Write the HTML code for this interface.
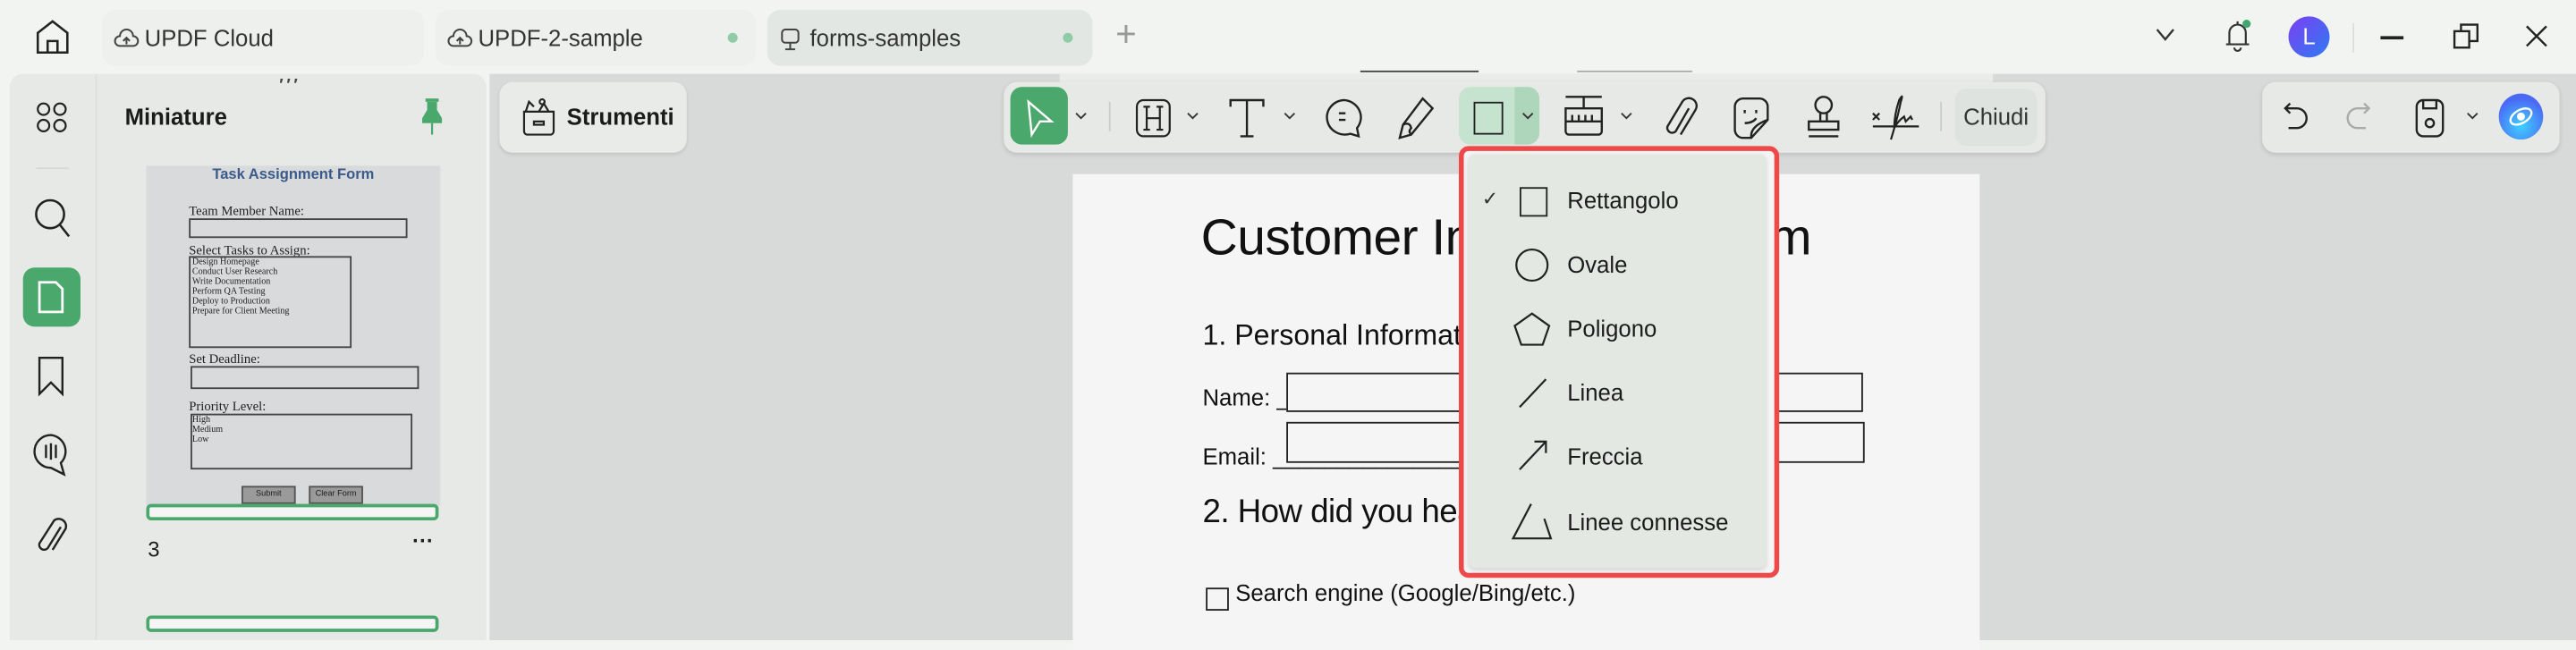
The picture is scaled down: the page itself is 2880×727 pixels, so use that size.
<!DOCTYPE html>
<html><head><meta charset="utf-8">
<style>
html,body{margin:0;padding:0;width:2880px;height:694px;overflow:hidden;background:#f2f4f2;}
#w{position:absolute;left:0;top:0;width:1568px;height:378px;transform:scale(1.836735,1.835979);transform-origin:0 0;font-family:"Liberation Sans","DejaVu Sans",sans-serif;color:#1b1b1b;}
.a{position:absolute;}
svg{position:absolute;overflow:visible;}
.tab{position:absolute;top:6px;height:34px;border-radius:8px;background:#edf0ed;font-size:14px;line-height:34px;color:#333;}
.dot{position:absolute;width:6px;height:6px;border-radius:50%;background:#8fcca6;top:14px;}
.tt{position:absolute;font-size:8px;font-family:"Liberation Serif",serif;color:#222;}
.box{position:absolute;border:1px solid #444;}
.mi{position:absolute;left:954px;font-size:14px;color:#1b1b1b;}
</style></head><body><div id="w">
<!-- title bar -->
<svg style="left:21px;top:11px" width="22" height="22" viewBox="0 0 22 22" fill="none" stroke="#222" stroke-width="1.4"><path d="M2 9 L11 2 L20 9 V21 H2 Z M8 21 V14 H14 V21"/></svg>
<div class="tab" style="left:62px;width:196px;"><svg style="left:8px;top:10px" width="14" height="14" viewBox="0 0 14 14" fill="none" stroke="#444" stroke-width="1.1"><path d="M3 12 A3 3 0 0 1 3 6 A4 4 0 0 1 11 6 A3 3 0 0 1 11 12 Z M7 7 V11 M5 9 L7 7 L9 9"/></svg><span class="a" style="left:26px">UPDF Cloud</span></div>
<div class="tab" style="left:265px;width:195px;"><svg style="left:8px;top:10px" width="14" height="14" viewBox="0 0 14 14" fill="none" stroke="#444" stroke-width="1.1"><path d="M3 12 A3 3 0 0 1 3 6 A4 4 0 0 1 11 6 A3 3 0 0 1 11 12 Z M7 7 V11 M5 9 L7 7 L9 9"/></svg><span class="a" style="left:26px">UPDF-2-sample</span><div class="dot" style="left:178px"></div></div>
<div class="tab" style="left:467px;width:198px;background:#e3e7e3"><svg style="left:8px;top:11px" width="12" height="14" viewBox="0 0 12 14" fill="none" stroke="#444" stroke-width="1.1"><rect x="1" y="1" width="10" height="8" rx="2"/><path d="M6 9 V13 M3 13 H9"/></svg><span class="a" style="left:26px">forms-samples</span><div class="dot" style="left:180px"></div></div>
<div class="a" style="left:679px;top:8px;font-size:22px;color:#999;font-weight:300">+</div>
<svg style="left:1312px;top:17px" width="12" height="8" viewBox="0 0 12 8" fill="none" stroke="#333" stroke-width="1.3"><path d="M1 1 L6 7 L11 1"/></svg>
<svg style="left:1354px;top:12px" width="16" height="20" viewBox="0 0 16 20" fill="none" stroke="#333" stroke-width="1.2"><path d="M3 15 V8 A5 5 0 0 1 13 8 V15 Z M1 15 H15 M6 17 A2 2 0 0 0 10 17 M8 1 V3"/></svg>
<div class="a" style="left:1365px;top:12px;width:5px;height:5px;border-radius:50%;background:#3fa86a"></div>
<div class="a" style="left:1393px;top:10px;width:25px;height:25px;border-radius:50%;background:linear-gradient(135deg,#7b3ff2,#2f7bf2);color:#fff;font-size:14px;text-align:center;line-height:25px">L</div>
<div class="a" style="left:1432px;top:14px;width:1px;height:18px;background:#ddd"></div>
<div class="a" style="left:1449px;top:22px;width:14px;height:1.5px;background:#222"></div>
<svg style="left:1493px;top:14px" width="16" height="16" viewBox="0 0 16 16" fill="none" stroke="#222" stroke-width="1.3"><rect x="1" y="5" width="9" height="10"/><path d="M5 5 V1 H15 V11 H10"/></svg>
<svg style="left:1537px;top:15px" width="14" height="14" viewBox="0 0 14 14" fill="none" stroke="#222" stroke-width="1.3"><path d="M1 1 L13 13 M13 1 L1 13"/></svg>
<div class="a" style="left:828px;top:43px;width:72px;height:1px;background:#444"></div>
<div class="a" style="left:960px;top:43px;width:70px;height:1px;background:#aaa"></div>

<!-- left panel -->
<div class="a" style="left:6px;top:45px;width:290px;height:345px;background:#e6e9e6;border-radius:8px 8px 0 0"></div>
<div class="a" style="left:58px;top:45px;width:1px;height:345px;background:#dde0dd"></div>
<svg style="left:22px;top:62px" width="20" height="20" viewBox="0 0 20 20" fill="none" stroke="#222" stroke-width="1.2"><rect x="1" y="1" width="7" height="7" rx="3.5"/><rect x="11" y="1" width="7" height="7" rx="3.5"/><rect x="1" y="11" width="7" height="7" rx="3.5"/><rect x="11" y="11" width="7" height="7" rx="3.5"/></svg>
<div class="a" style="left:22px;top:102px;width:20px;height:1px;background:#d6d9d6"></div>
<svg style="left:21px;top:121px" width="22" height="24" viewBox="0 0 22 24" fill="none" stroke="#222" stroke-width="1.4"><circle cx="9.5" cy="9.5" r="8.5"/><path d="M15.5 16 L21 23"/></svg>
<div class="a" style="left:14px;top:163px;width:35px;height:36px;border-radius:7px;background:#4aa86c"></div>
<svg style="left:22px;top:170px" width="18" height="22" viewBox="0 0 18 22" fill="none" stroke="#fff" stroke-width="1.5"><path d="M2 2 H12 L16 6 V20 H2 Z"/></svg>
<svg style="left:23px;top:217px" width="16" height="24" viewBox="0 0 16 24" fill="none" stroke="#222" stroke-width="1.3"><path d="M1 1 H15 V23 L8 16 L1 23 Z"/></svg>
<svg style="left:20px;top:264px" width="22" height="26" viewBox="0 0 22 26" fill="none" stroke="#222" stroke-width="1.3"><path d="M11 1 A10 10 0 1 0 11 21 L19 25 L17 18 A10 10 0 0 0 11 1 Z M8 7 V15 M11 6 V16 M14 7 V15"/></svg>
<svg style="left:22px;top:313px" width="20" height="26" viewBox="0 0 20 26" fill="none" stroke="#222" stroke-width="1.3"><path d="M15 8 L7 21 A3 3 0 0 1 2 18 L11 4 A4.5 4.5 0 0 1 18 9 L10 22"/></svg>
<div class="a" style="left:76px;top:63px;font-size:14px;font-weight:bold;color:#1b1b1b">Miniature</div>
<div class="a" style="left:170px;top:47px;font-size:10px;letter-spacing:2px;color:#444;font-weight:bold">&#8242;&#8242;&#8242;</div>
<svg style="left:256px;top:60px" width="14" height="22" viewBox="0 0 14 22" fill="#4aa86c"><rect x="3" y="0" width="8" height="2"/><path d="M4 2 H10 V7 L13 12 V15 H1 V12 L4 7 Z"/><rect x="6.4" y="15" width="1.2" height="7"/></svg>
<div class="a" style="left:89px;top:101px;width:179px;height:207px;background:#d8dadb"></div>
<div class="a" style="left:89px;top:101px;width:179px;text-align:center;font-size:9px;font-weight:bold;color:#3a5a8a">Task Assignment Form</div>
<div class="tt" style="left:115px;top:124px">Team Member Name:</div>
<div class="box" style="left:115px;top:133px;width:131px;height:10px"></div>
<div class="tt" style="left:115px;top:148px">Select Tasks to Assign:</div>
<div class="box" style="left:115px;top:156px;width:97px;height:54px"></div>
<div class="tt" style="left:117px;top:157px;font-size:5.5px;line-height:6px">Design Homepage<br>Conduct User Research<br>Write Documentation<br>Perform QA Testing<br>Deploy to Production<br>Prepare for Client Meeting</div>
<div class="tt" style="left:115px;top:214px">Set Deadline:</div>
<div class="box" style="left:116px;top:223px;width:137px;height:12px"></div>
<div class="tt" style="left:115px;top:243px">Priority Level:</div>
<div class="box" style="left:116px;top:252px;width:133px;height:32px"></div>
<div class="tt" style="left:117px;top:253px;font-size:5.5px;line-height:6px">High<br>Medium<br>Low</div>
<div class="a" style="left:147px;top:296px;width:31px;height:9px;background:#9a9a9a;border:1px solid #555;font-size:5px;text-align:center;line-height:9px">Submit</div>
<div class="a" style="left:188px;top:296px;width:31px;height:9px;background:#9a9a9a;border:1px solid #555;font-size:5px;text-align:center;line-height:9px">Clear Form</div>
<div class="a" style="left:89px;top:307px;width:174px;height:6px;border:2px solid #4aa86c;border-radius:3px;background:#f4f5f4"></div>
<div class="a" style="left:90px;top:327px;font-size:13px">3</div>
<div class="a" style="left:251px;top:322px;font-size:13px;font-weight:bold;letter-spacing:0px">&middot;&middot;&middot;</div>
<div class="a" style="left:89px;top:375px;width:174px;height:6px;border:2px solid #4aa86c;border-radius:3px;background:#f4f5f4"></div>

<!-- main area -->
<div class="a" style="left:298px;top:45px;width:1270px;height:345px;background:#d8dad9"></div>
<div class="a" style="left:645px;top:45px;width:568px;height:38px;background:#e9ece9"></div>
<div class="a" style="left:304px;top:50px;width:114px;height:43px;border-radius:8px;background:#e8ebe8;box-shadow:0 1px 2px rgba(0,0,0,.1)"></div>
<svg style="left:317px;top:59px" width="22" height="24" viewBox="0 0 22 24" fill="none" stroke="#222" stroke-width="1.2"><path d="M2 9 H20 V21 A2 2 0 0 1 18 23 H4 A2 2 0 0 1 2 21 Z M8 15 H14 V17 H8 Z M3 9 L5 3 L8 6 M11 9 L14 4 L17 9"/><circle cx="13" cy="3" r="1.5"/></svg>
<div class="a" style="left:345px;top:63px;font-size:14px;font-weight:bold">Strumenti</div>

<!-- toolbar -->
<div class="a" style="left:611px;top:50px;width:634px;height:43px;border-radius:8px;background:#e6e9e6;box-shadow:0 1px 3px rgba(0,0,0,.12)"></div>
<div class="a" style="left:615px;top:53px;width:35px;height:35px;border-radius:7px;background:#4aa86c"></div>
<svg style="left:624px;top:61px" width="18" height="22" viewBox="0 0 18 22" fill="none" stroke="#fff" stroke-width="1.3"><path d="M2 1 L16 13 H9 L4 21 Z"/></svg>
<svg style="left:654px;top:68px" width="8" height="5" viewBox="0 0 8 5" fill="none" stroke="#333" stroke-width="1"><path d="M1 1 L4 4 L7 1"/></svg>
<div class="a" style="left:675px;top:62px;width:1px;height:18px;background:#ccc"></div>
<svg style="left:691px;top:60px" width="22" height="24" viewBox="0 0 22 24" fill="none" stroke="#222" stroke-width="1.2"><rect x="1" y="1" width="20" height="22" rx="4"/><path d="M7 5 V19 M15 5 V19 M7 12 H15 M5 5 H9 M13 5 H17 M5 19 H9 M13 19 H17"/></svg>
<svg style="left:722px;top:68px" width="8" height="5" viewBox="0 0 8 5" fill="none" stroke="#333" stroke-width="1"><path d="M1 1 L4 4 L7 1"/></svg>
<svg style="left:748px;top:60px" width="22" height="24" viewBox="0 0 22 24" fill="none" stroke="#222" stroke-width="1.3"><path d="M1 5 V1 H21 V5 M11 1 V23 M7 23 H15"/></svg>
<svg style="left:781px;top:68px" width="8" height="5" viewBox="0 0 8 5" fill="none" stroke="#333" stroke-width="1"><path d="M1 1 L4 4 L7 1"/></svg>
<svg style="left:806px;top:60px" width="24" height="24" viewBox="0 0 24 24" fill="none" stroke="#222" stroke-width="1.3"><path d="M12 1 A11 10.5 0 1 0 16 21.5 L21 23 L20 18 A11 10.5 0 0 0 12 1 Z M9 9 H13 M9 13 H13"/></svg>
<svg style="left:850px;top:59px" width="24" height="26" viewBox="0 0 24 26" fill="none" stroke="#222" stroke-width="1.3"><path d="M16 1 L22 7 L9 23 L2 25 L4 17 Z M4 17 Q8 15 9 19 Q7 21 9 23"/></svg>
<div class="a" style="left:888px;top:53px;width:49px;height:35px;border-radius:7px;background:#c6e3cf"></div>
<div class="a" style="left:922px;top:53px;width:15px;height:35px;border-radius:0 7px 7px 0;background:#add6bb"></div>
<div class="a" style="left:897px;top:62px;width:16px;height:18px;border:1.5px solid #222"></div>
<svg style="left:926px;top:68px" width="8" height="5" viewBox="0 0 8 5" fill="none" stroke="#333" stroke-width="1"><path d="M1 1 L4 4 L7 1"/></svg>
<svg style="left:952px;top:58px" width="24" height="26" viewBox="0 0 24 26" fill="none" stroke="#222" stroke-width="1.3"><path d="M1 1 H23 M12 1 V8 M1 8 H23 V22 A2 2 0 0 1 21 24 H3 A2 2 0 0 1 1 22 Z M1 16 H23 M5 12 V16 M9 12 V16 M13 12 V16 M17 12 V16"/></svg>
<svg style="left:986px;top:68px" width="8" height="5" viewBox="0 0 8 5" fill="none" stroke="#333" stroke-width="1"><path d="M1 1 L4 4 L7 1"/></svg>
<svg style="left:1013px;top:59px" width="22" height="26" viewBox="0 0 22 26" fill="none" stroke="#222" stroke-width="1.3"><path d="M15 7 L7 21 A3 3 0 0 1 2 18 L11 3 A4.5 4.5 0 0 1 19 8 L10 23"/></svg>
<svg style="left:1055px;top:59px" width="22" height="26" viewBox="0 0 22 26" fill="none" stroke="#222" stroke-width="1.3"><path d="M6 1 H16 A5 5 0 0 1 21 6 V14 L11 25 H6 A5 5 0 0 1 1 20 V6 A5 5 0 0 1 6 1 Z M7 8 V10 M14 8 V10 M7 16 Q12 16 14 13 M11 25 Q10 18 21 14"/></svg>
<svg style="left:1099px;top:58px" width="22" height="27" viewBox="0 0 22 27" fill="none" stroke="#222" stroke-width="1.3"><circle cx="11" cy="6" r="5"/><path d="M9 11 V16 M13 11 V16 M2 16 H20 V21 H2 Z M2 25 H20"/></svg>
<svg style="left:1139px;top:58px" width="30" height="28" viewBox="0 0 30 28" fill="none" stroke="#222" stroke-width="1.2"><path d="M1 11 L5 15 M5 11 L1 15 M1 19 H29 M12 27 Q16 14 18 4 Q20 -2 17 3 Q14 12 14 20 Q16 16 20 13 L21 16 L24 13 L25 15"/></svg>
<div class="a" style="left:1181px;top:62px;width:1px;height:18px;background:#ccc"></div>
<div class="a" style="left:1190px;top:54px;width:50px;height:35px;border-radius:7px;background:#dfe3df;font-size:14px;line-height:35px;text-align:center;color:#333">Chiudi</div>

<!-- right toolbar -->
<div class="a" style="left:1377px;top:50px;width:181px;height:43px;border-radius:8px;background:#e6e9e6;box-shadow:0 1px 3px rgba(0,0,0,.12)"></div>
<svg style="left:1390px;top:62px" width="14" height="18" viewBox="0 0 14 18" fill="none" stroke="#222" stroke-width="1.3"><path d="M4 1 L1 4 L4 7 M1 4 H8 A5 5 0 0 1 8 16 H3"/></svg>
<svg style="left:1429px;top:62px" width="14" height="18" viewBox="0 0 14 18" fill="none" stroke="#aaa" stroke-width="1.3"><path d="M10 1 L13 4 L10 7 M13 4 H6 A5 5 0 0 0 6 16 H11"/></svg>
<svg style="left:1470px;top:60px" width="18" height="24" viewBox="0 0 18 24" fill="none" stroke="#222" stroke-width="1.3"><rect x="1" y="1" width="16" height="22" rx="4"/><path d="M5 1 V6 H13 V1"/><circle cx="9" cy="15" r="2.5"/></svg>
<svg style="left:1501px;top:68px" width="8" height="5" viewBox="0 0 8 5" fill="none" stroke="#333" stroke-width="1"><path d="M1 1 L4 4 L7 1"/></svg>
<div class="a" style="left:1521px;top:57px;width:27px;height:28px;border-radius:50%;background:radial-gradient(circle at 50% 70%,#3fd0ff,#4a6af5 70%)"></div>
<svg style="left:1525px;top:62px" width="19" height="18" viewBox="0 0 19 18" fill="none" stroke="#fff" stroke-width="1.3"><ellipse cx="9.5" cy="9" rx="7" ry="4" transform="rotate(-30 9.5 9)"/><circle cx="9.5" cy="9" r="1.8" fill="#fff"/></svg>

<!-- document -->
<div class="a" style="left:653px;top:106px;width:552px;height:290px;background:#f4f5f4"></div>
<div class="a" style="left:731px;top:127px;font-size:31px;color:#111;letter-spacing:-0.3px">Customer Information Form</div>
<div class="a" style="left:732px;top:194px;font-size:17.5px;color:#111">1. Personal Information</div>
<div class="a" style="left:732px;top:234px;font-size:14px;color:#111">Name: ________________________</div>
<div class="box" style="left:783px;top:227px;width:349px;height:22px;border-color:#222;background:#f4f5f4"></div>
<div class="a" style="left:732px;top:270px;font-size:14px;color:#111">Email: ________________________</div>
<div class="box" style="left:783px;top:257px;width:350px;height:23px;border-color:#222;background:#f4f5f4"></div>
<div class="a" style="left:732px;top:301px;font-size:20px;color:#111;letter-spacing:-0.3px">2. How did you hear about us?</div>
<div class="a" style="left:734px;top:358px;width:12px;height:12px;border:1px solid #222"></div>
<div class="a" style="left:752px;top:353px;font-size:14px;color:#111">Search engine (Google/Bing/etc.)</div>

<!-- dropdown -->
<div class="a" style="left:888px;top:89px;width:189px;height:257px;border:3px solid #ef4848;border-radius:6px;background:#f4f5f4"></div>
<div class="a" style="left:894px;top:94px;width:181px;height:252px;background:#e3e8e3;border-radius:4px;box-shadow:0 1px 3px rgba(0,0,0,.15)"></div>
<div class="a" style="left:902px;top:114px;font-size:12px;color:#333">&#10003;</div>
<div class="a" style="left:925px;top:114px;width:15px;height:16px;border:1.3px solid #222"></div>
<div class="mi" style="top:114px">Rettangolo</div>
<svg style="left:922px;top:151px" width="21" height="21" viewBox="0 0 21 21" fill="none" stroke="#222" stroke-width="1.2"><circle cx="10.5" cy="10.5" r="9.5"/></svg>
<div class="mi" style="top:153px">Ovale</div>
<svg style="left:921px;top:190px" width="23" height="21" viewBox="0 0 23 21" fill="none" stroke="#222" stroke-width="1.2"><path d="M11.5 1 L22 8.5 L18 20 H5 L1 8.5 Z"/></svg>
<div class="mi" style="top:192px">Poligono</div>
<svg style="left:924px;top:230px" width="18" height="19" viewBox="0 0 18 19" fill="none" stroke="#222" stroke-width="1.2"><path d="M1 18 L17 1"/></svg>
<div class="mi" style="top:231px">Linea</div>
<svg style="left:924px;top:268px" width="18" height="19" viewBox="0 0 18 19" fill="none" stroke="#222" stroke-width="1.2"><path d="M1 18 L17 1 M10 1 H17 V8"/></svg>
<div class="mi" style="top:270px">Freccia</div>
<svg style="left:920px;top:306px" width="25" height="23" viewBox="0 0 25 23" fill="none" stroke="#222" stroke-width="1.2"><path d="M12 1 L1 22 H24 L20 10"/></svg>
<div class="mi" style="top:310px">Linee connesse</div>
</div></body></html>
